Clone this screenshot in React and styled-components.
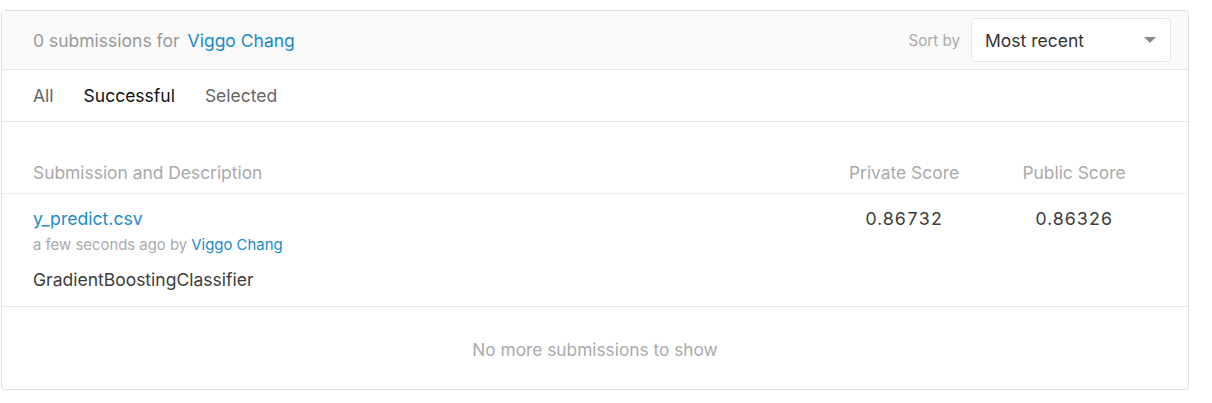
import React from "react";
import styled, { createGlobalStyle } from "styled-components";

const Global = createGlobalStyle`
  html, body { margin: 0; padding: 0; background: #fff; }
  body { font-family: Inter, "Noto Sans", sans-serif; -webkit-font-smoothing: antialiased; }
`;

const Page = styled.div`
  padding: 10px 0 0 1px;
`;

const Card = styled.div`
  width: 1188px;
  box-sizing: border-box;
  border: 1px solid #e0e0e0;
  border-radius: 4px;
  overflow: hidden;
  background: #fff;
`;

const Header = styled.div`
  display: flex;
  align-items: center;
  justify-content: space-between;
  height: 58px;
  padding: 0 17px 0 31px;
  background: #fafafa;
  border-bottom: 1px solid #e6e6e6;
`;

const Title = styled.div`
  font-size: 17.5px;
  color: #999;
  display: flex;
  gap: 8px;
`;

const Link = styled.a`
  color: #1a8ac6;
  text-decoration: none;
`;

const SortWrap = styled.div`
  display: flex;
  align-items: center;
  gap: 11px;
`;

const SortLabel = styled.span`
  font-size: 15.2px;
  color: #aaa;
`;

const Select = styled.div`
  width: 200px;
  height: 44px;
  box-sizing: border-box;
  border: 1px solid #e6e6e6;
  border-radius: 4px;
  background: #fff;
  display: flex;
  align-items: center;
  justify-content: space-between;
  padding: 0 14px 0 13px;
  font-size: 17.5px;
  color: #333;
`;

const Caret = styled.span`
  width: 0;
  height: 0;
  border-left: 6px solid transparent;
  border-right: 6px solid transparent;
  border-top: 6px solid #888;
`;

const Tabs = styled.div`
  display: flex;
  align-items: center;
  height: 51px;
  padding: 0 31px;
  gap: 30px;
  border-bottom: 1px solid #e6e6e6;
`;

const Tab = styled.span`
  font-size: 17.5px;
  color: ${(p) => (p.$active ? "#111" : "#666")};
`;

const Grid = styled.div`
  display: grid;
  grid-template-columns: 1fr 170px 170px;
  padding: 0 29px 0 31px;
`;

const HeadRow = styled(Grid)`
  padding-top: 40px;
  padding-bottom: 9px;
  font-size: 17.4px;
  line-height: 22px;
  color: #aaa;
  border-bottom: 1px solid #eee;
`;

const HeadCell = styled.div`
  text-align: ${(p) => (p.$center ? "center" : "left")};
`;

const Row = styled(Grid)`
  padding-top: 13px;
  padding-bottom: 14px;
  border-bottom: 1px solid #e6e6e6;
`;

const Desc = styled.div`
  display: flex;
  flex-direction: column;
`;

const FileName = styled(Link)`
  font-size: 17.6px;
  line-height: 24px;
`;

const Meta = styled.div`
  font-size: 14.9px;
  line-height: 24px;
  margin-top: 2px;
  color: #aaa;
`;

const Note = styled.div`
  font-size: 17.5px;
  line-height: 24px;
  margin-top: 11px;
  color: #3c3c3c;
`;

const Score = styled.div`
  font-size: 17.8px;
  line-height: 24px;
  letter-spacing: 0.5px;
  font-variant-numeric: tabular-nums;
  color: #3c3c3c;
  text-align: center;
`;

const Footer = styled.div`
  height: 82px;
  display: flex;
  align-items: center;
  justify-content: center;
  padding-top: 3px;
  box-sizing: border-box;
  font-size: 17.3px;
  color: #aaa;
`;

export default function App() {
  return (
    <Page>
      <Global />
      <Card>
        <Header>
          <Title>
            <span>0 submissions for</span>
            <Link href="#">Viggo Chang</Link>
          </Title>
          <SortWrap>
            <SortLabel>Sort by</SortLabel>
            <Select>
              <span>Most recent</span>
              <Caret />
            </Select>
          </SortWrap>
        </Header>
        <Tabs>
          <Tab>All</Tab>
          <Tab $active>Successful</Tab>
          <Tab>Selected</Tab>
        </Tabs>
        <HeadRow>
          <HeadCell>Submission and Description</HeadCell>
          <HeadCell $center>Private Score</HeadCell>
          <HeadCell $center>Public Score</HeadCell>
        </HeadRow>
        <Row>
          <Desc>
            <FileName href="#">y_predict.csv</FileName>
            <Meta>
              a few seconds ago by <Link href="#">Viggo Chang</Link>
            </Meta>
            <Note>GradientBoostingClassifier</Note>
          </Desc>
          <Score>0.86732</Score>
          <Score>0.86326</Score>
        </Row>
        <Footer>No more submissions to show</Footer>
      </Card>
    </Page>
  );
}
